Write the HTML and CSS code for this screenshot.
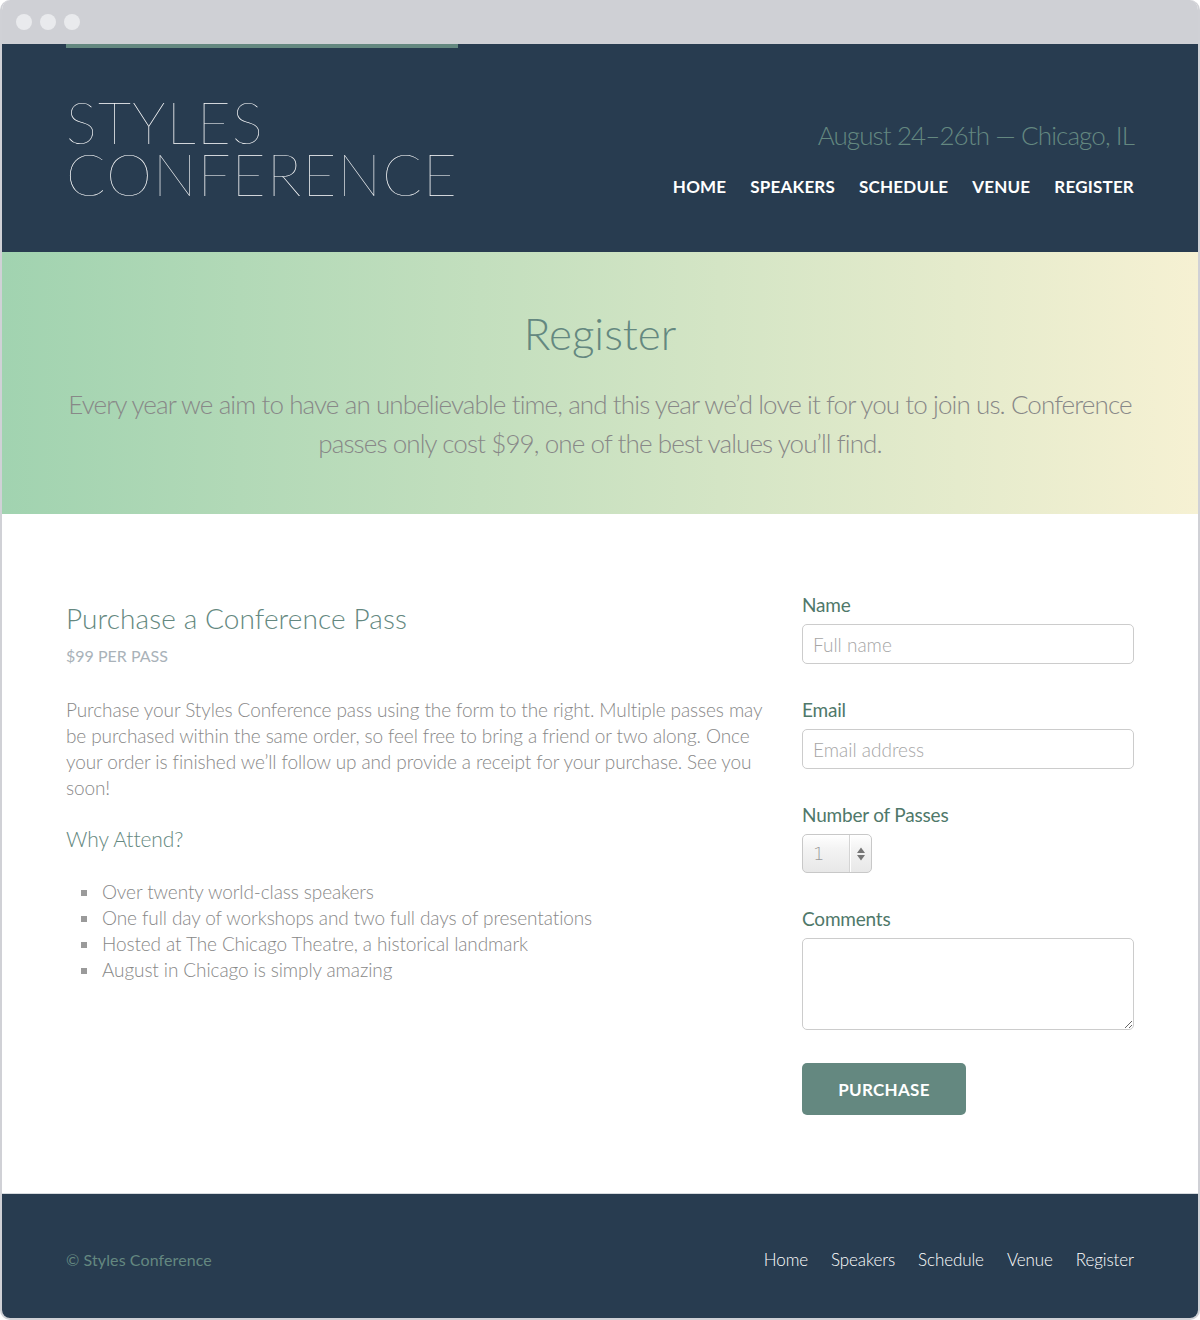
FILE: index.html
```html
<!DOCTYPE html>
<html lang="en">
<head>
<meta charset="utf-8">
<title>Register — Styles Conference</title>
<link rel="stylesheet" href="styles.css">
</head>
<body>
<div class="browser">
  <div class="chrome">
    <span class="dot"></span><span class="dot"></span><span class="dot"></span>
  </div>
  <header class="primary-header">
    <div class="container header-inner">
      <h1 class="logo"><span class="logo-line">Styles</span><span class="logo-line">Conference</span></h1>
      <div class="header-right">
        <h3 class="tagline">August 24&ndash;26th &mdash; Chicago, IL</h3>
        <nav class="primary-nav">
          <a href="#">Home</a>
          <a href="#">Speakers</a>
          <a href="#">Schedule</a>
          <a href="#">Venue</a>
          <a href="#">Register</a>
        </nav>
      </div>
    </div>
  </header>

  <section class="hero">
    <div class="container">
      <h2 class="hero-title">Register</h2>
      <p class="hero-text">Every year we aim to have an unbelievable time, and this year we&rsquo;d love it for you to join us. Conference passes only cost $99, one of the best values you&rsquo;ll find.</p>
    </div>
  </section>

  <section class="main">
    <div class="container main-grid">
      <div class="info">
        <h2 class="info-title">Purchase a Conference Pass</h2>
        <h5 class="price">$99 per pass</h5>
        <p class="info-text">Purchase your Styles Conference pass using the form to the right. Multiple passes may be purchased within the same order, so feel free to bring a friend or two along. Once your order is finished we&rsquo;ll follow up and provide a receipt for your purchase. See you soon!</p>
        <h3 class="why">Why Attend?</h3>
        <ul class="reasons">
          <li>Over twenty world-class speakers</li>
          <li>One full day of workshops and two full days of presentations</li>
          <li>Hosted at The Chicago Theatre, a historical landmark</li>
          <li>August in Chicago is simply amazing</li>
        </ul>
      </div>
      <form class="register-form">
        <label class="field-label" for="name">Name</label>
        <input class="field" id="name" type="text" placeholder="Full name">

        <label class="field-label" for="email">Email</label>
        <input class="field" id="email" type="email" placeholder="Email address">

        <label class="field-label" for="quantity">Number of Passes</label>
        <div class="number">
          <input class="number-input" id="quantity" type="text" value="1">
          <span class="spinner">
            <svg width="10" height="16" viewBox="0 0 10 16"><path d="M5 1.5 L9 7 L1 7 Z" fill="#767676"/><path d="M1 9 L9 9 L5 14.5 Z" fill="#767676"/></svg>
          </span>
        </div>

        <label class="field-label" for="comments">Comments</label>
        <textarea class="field comments" id="comments"></textarea>

        <button class="btn" type="button">Purchase</button>
      </form>
    </div>
  </section>

  <footer class="primary-footer">
    <div class="container footer-inner">
      <small class="copyright">&copy; Styles Conference</small>
      <nav class="footer-nav">
        <a href="#">Home</a>
        <a href="#">Speakers</a>
        <a href="#">Schedule</a>
        <a href="#">Venue</a>
        <a href="#">Register</a>
      </nav>
    </div>
  </footer>
</div>
</body>
</html>
```

FILE: styles.css
```css
* { box-sizing: border-box; }

html, body {
  margin: 0;
  padding: 0;
  background: #ffffff;
}

body {
  font-family: Lato, "Open Sans", "Liberation Sans", sans-serif;
  font-weight: 300;
  font-size: 19px;
  line-height: 26px;
  letter-spacing: -0.1px;
  color: #888888;
}

a { color: inherit; text-decoration: none; }

h1, h2, h3, h5, p, ul { margin: 0; }

.browser {
  width: 1200px;
  height: 1320px;
  border: 2px solid #d0d1d6;
  border-top: 0;
  border-radius: 10px;
  overflow: hidden;
  display: flex;
  flex-direction: column;
  background: #ffffff;
}

.chrome {
  height: 44px;
  flex: none;
  background: #cfd0d5;
  display: flex;
  align-items: center;
  gap: 8px;
  padding-left: 14px;
}

.dot {
  width: 16px;
  height: 16px;
  border-radius: 50%;
  background: #e9eaed;
}

.container {
  width: 1068px;
  margin: 0 auto;
}

/* Header */
.primary-header {
  background: #283c50;
  height: 208px;
  flex: none;
}

.header-inner {
  display: flex;
  justify-content: space-between;
  align-items: flex-start;
}

.logo {
  border-top: 4px solid #648880;
  padding-top: 48px;
  width: 392px;
  color: #ffffff;
  font-weight: 100;
  font-size: 58px;
  line-height: 52px;
  letter-spacing: 1.3px;
  text-transform: uppercase;
}

.logo-line {
  display: block;
  height: 52px;
}

.header-right {
  display: flex;
  flex-direction: column;
  align-items: flex-end;
  padding-top: 76px;
}

.tagline {
  color: #648880;
  font-weight: 300;
  font-size: 26px;
  line-height: 30px;
  letter-spacing: -0.9px;
}

.primary-nav {
  display: flex;
  gap: 24px;
  margin-top: 26px;
  font-size: 17px;
  line-height: 22px;
  font-weight: 700;
  letter-spacing: 0.2px;
  color: #ffffff;
  text-transform: uppercase;
}

/* Hero */
.hero {
  flex: none;
  height: 262px;
  background: linear-gradient(to right, #a1d3b0 0%, #f6f1d3 100%);
  padding-top: 55px;
  text-align: center;
}

.hero-title {
  color: #648880;
  font-weight: 300;
  font-size: 44px;
  line-height: 52px;
  letter-spacing: 0;
}

.hero-text {
  margin-top: 26px;
  font-size: 26px;
  line-height: 39px;
  font-weight: 300;
  letter-spacing: -0.9px;
  color: #888888;
}

/* Main */
.main {
  flex: 1;
  padding-top: 80px;
}

.main-grid {
  display: grid;
  grid-template-columns: 706px 332px;
  column-gap: 30px;
  align-items: start;
}

.info-title {
  margin-top: 7px;
  color: #648880;
  font-weight: 300;
  font-size: 28px;
  line-height: 34px;
  letter-spacing: 0.1px;
}

.price {
  margin-top: 10px;
  color: #a9b2b9;
  font-weight: 400;
  font-size: 16px;
  line-height: 22px;
  letter-spacing: 0;
  text-transform: uppercase;
}

.info-text {
  margin-top: 30px;
}

.why {
  margin-top: 23px;
  color: #648880;
  font-weight: 300;
  font-size: 21px;
  line-height: 30px;
  letter-spacing: -0.1px;
}

.reasons {
  margin-top: 25px;
  padding-left: 0;
  list-style: none;
}

.reasons li {
  display: flex;
  align-items: center;
}

.reasons li::before {
  content: "";
  flex: none;
  width: 6px;
  height: 6px;
  margin: 1px 15px 0 15px;
  background: #9a9a9a;
}

/* Form */
.register-form {
  display: flex;
  flex-direction: column;
  align-items: flex-start;
}

.field-label {
  display: block;
  color: #4f786a;
  font-weight: 400;
  font-size: 19px;
  line-height: 22px;
  letter-spacing: -0.2px;
  margin-bottom: 8px;
}

.field {
  width: 332px;
  height: 40px;
  border: 1px solid #cccccc;
  border-radius: 5px;
  padding: 0 10px;
  font-family: Lato, "Open Sans", "Liberation Sans", sans-serif;
  font-weight: 300;
  font-size: 19px;
  color: #888888;
  margin-bottom: 35px;
  background: #ffffff;
}

.field::placeholder {
  color: #a6a6a6;
}

.number {
  display: flex;
  width: 70px;
  height: 39px;
  border: 1px solid #c8c8c8;
  border-radius: 5px;
  overflow: hidden;
  background: linear-gradient(to bottom, #ffffff 0%, #f4f4f4 35%, #e8e8e8 100%);
  box-shadow: inset 0 1px 0 #ffffff;
  margin-bottom: 35px;
}

.number-input {
  width: 46px;
  border: 0;
  background: transparent;
  padding: 0 0 0 10px;
  font-family: "DejaVu Sans", "Liberation Sans", sans-serif;
  font-size: 18px;
  font-weight: 300;
  color: #9a9a9a;
  outline: none;
}

.spinner {
  flex: 1;
  display: flex;
  align-items: center;
  justify-content: center;
  border-left: 1px solid #d4d4d4;
  box-shadow: inset 1px 0 0 #ffffff;
}

.comments {
  height: 92px;
  padding: 8px 10px;
  resize: vertical;
  margin-bottom: 33px;
}

.btn {
  width: 164px;
  height: 52px;
  border: 0;
  border-radius: 5px;
  background: #648880;
  color: #ffffff;
  font-family: Lato, "Open Sans", "Liberation Sans", sans-serif;
  font-weight: 700;
  font-size: 17px;
  text-transform: uppercase;
  letter-spacing: 0.3px;
}

/* Footer */
.primary-footer {
  flex: none;
  height: 125px;
  padding-top: 7px;
  background: #283c50;
  border-top: 1px solid #d6dade;
  display: flex;
  align-items: center;
}

.footer-inner {
  display: flex;
  justify-content: space-between;
  align-items: center;
  font-size: 17px;
  line-height: 22px;
  letter-spacing: 0;
}

.copyright {
  font-size: 16px;
  color: #648880;
  font-weight: 400;
  letter-spacing: 0.1px;
}

.footer-nav {
  display: flex;
  gap: 23px;
  color: #ffffff;
  font-weight: 300;
  letter-spacing: -0.1px;
}
```
